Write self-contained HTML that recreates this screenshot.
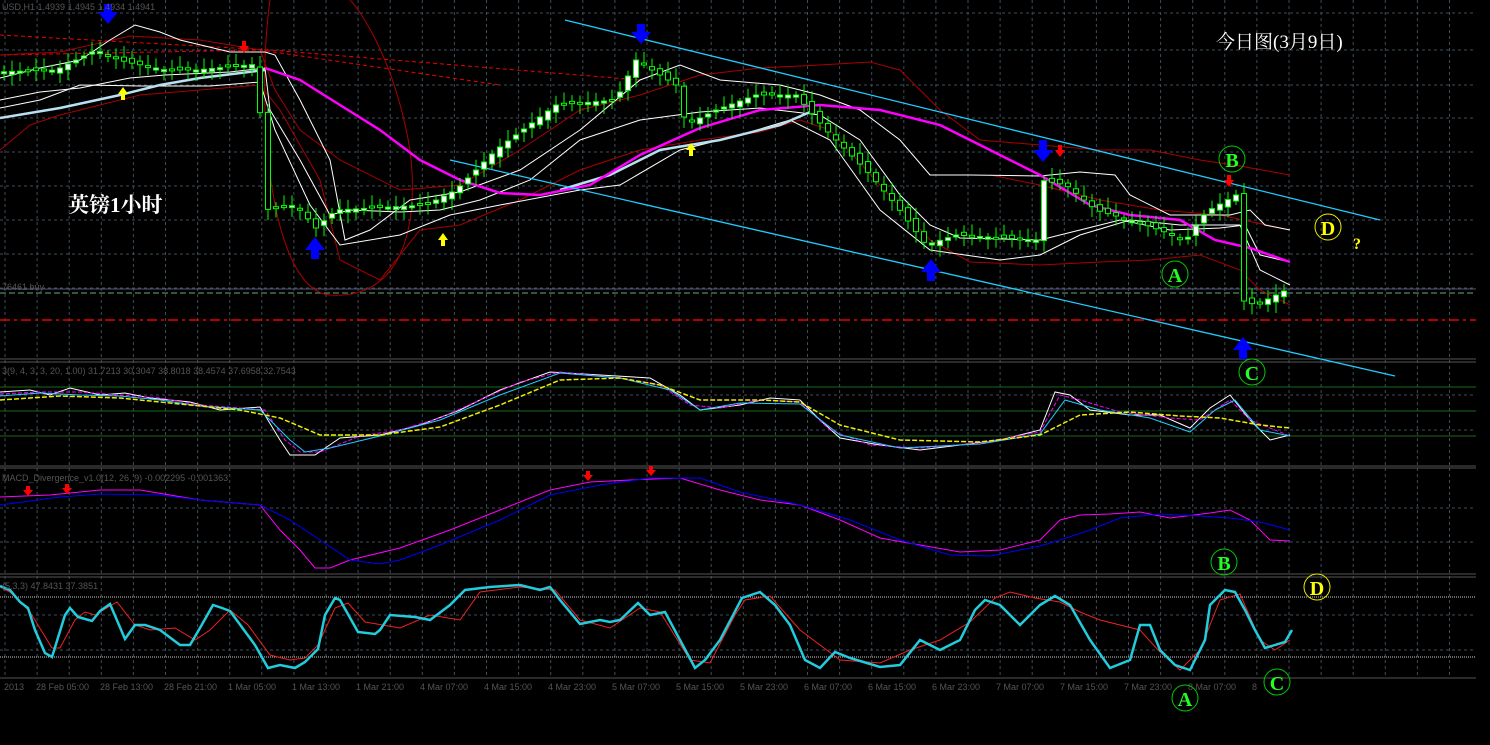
<!DOCTYPE html>
<html><head><meta charset="utf-8"><style>
html,body{margin:0;padding:0;background:#000;width:1490px;height:745px;overflow:hidden}
svg{display:block}
text{font-family:"Liberation Serif","Noto Serif CJK SC",serif}
text.sm,.sm text{font-family:"Liberation Sans",sans-serif;font-size:9px;fill:#555}
</style></head><body>
<svg id="s" width="1490" height="745" viewBox="0 0 1490 745" xmlns="http://www.w3.org/2000/svg">
<g id="grid" stroke="#3c4e5a" stroke-width="1" stroke-dasharray="3,3"></g>
<g stroke="#555" stroke-width="1">
<line x1="0" y1="359" x2="1476" y2="359"/><line x1="0" y1="362" x2="1476" y2="362"/>
<line x1="0" y1="466" x2="1476" y2="466"/><line x1="0" y1="468" x2="1476" y2="468"/>
<line x1="0" y1="574" x2="1476" y2="574"/><line x1="0" y1="577" x2="1476" y2="577"/>
<line x1="0" y1="678" x2="1476" y2="678"/>
</g>
<g fill="none">
<polyline stroke="#e00" stroke-width="1" stroke-dasharray="4,3" points="0,35 270,50 640,80"/>
<polyline stroke="#e00" stroke-width="1" stroke-dasharray="4,3" points="0,55 260,50 500,85"/>
<polyline stroke="#e00" stroke-width="1.5" stroke-dasharray="10,4,3,4" points="0,320 1476,320"/>
<polyline stroke="#6a7" stroke-width="1" stroke-dasharray="6,3" points="0,293 1476,293"/>
<polyline stroke="#557" stroke-width="1" points="0,289 1476,289"/>
<polyline stroke="#a00" stroke-width="1" points="0,55 60,52 130,36 200,40 260,50 275,90 300,130 340,160 400,190 460,185 520,150 580,110 640,95 700,75 760,68 820,65 870,62 900,70 940,110 980,140 1040,145 1100,150 1150,150 1200,160 1240,166 1290,175"/>
<polyline stroke="#a00" stroke-width="1" points="0,150 30,125 60,115 100,105 140,95 200,90 260,85 280,110 320,180 340,260 380,280 420,230 460,225 520,200 580,170 640,150 700,140 760,132 800,120 830,130 880,185 930,240 970,262 1040,265 1100,262 1150,260 1200,255 1240,270 1260,290 1290,305"/>
<path stroke="#a00" stroke-width="1" d="M270,0 C255,110 270,290 330,295 C400,300 420,230 410,150 C395,60 360,10 350,0"/>
<polyline stroke="#a00" stroke-width="1" points="990,175 1040,185 1100,200 1160,210 1220,215 1290,230"/>
<polyline stroke="#fff" stroke-width="1" points="0,78 40,68 80,60 110,40 135,25 160,32 180,40 230,52 265,52 275,55 300,100 330,160 345,240 370,230 410,200 460,192 520,170 580,130 640,80 680,65 720,80 780,85 820,95 860,110 900,140 930,175 970,175 1040,176 1080,172 1115,175 1130,195 1170,215 1230,215 1250,210 1265,225 1290,230"/>
<polyline stroke="#fff" stroke-width="1" points="0,100 40,92 80,88 130,78 165,75 230,72 265,68 270,110 300,160 330,215 350,210 400,212 440,210 480,200 530,180 580,140 640,120 700,112 760,108 820,115 860,140 900,195 930,225 960,238 1040,240 1080,230 1120,220 1170,230 1220,228 1245,225 1260,255 1290,262"/>
<polyline stroke="#fff" stroke-width="1" points="0,108 40,100 80,85 140,86 210,86 260,82 275,130 310,205 340,245 400,235 450,215 500,205 580,190 620,185 680,150 740,135 790,120 830,140 880,210 930,250 1000,260 1040,255 1080,235 1130,220 1180,225 1240,225 1260,270 1290,285"/>
<polyline stroke="#b8e0f0" stroke-width="2.5" points="0,118 60,108 120,95 160,85 200,78 265,70"/>
<polyline stroke="#b8e0f0" stroke-width="2.5" points="560,190 610,175 660,150 720,140 780,125 810,112"/>
<polyline stroke="#f0f" stroke-width="2.5" points="265,68 300,80 340,105 380,130 420,160 460,180 500,193 540,195 590,185 640,155 700,128 760,110 820,105 880,110 940,125 990,150 1040,175 1090,205 1130,215 1180,220 1215,240 1250,248 1290,262"/>
<line x1="565" y1="20" x2="1380" y2="220" stroke="#2cf" stroke-width="1.3"/>
<line x1="450" y1="160" x2="1395" y2="376" stroke="#2cf" stroke-width="1.3"/>
</g>
<g id="candles"></g>
<g>
<path d="M98,12 h20 l-10,12 z M104,12 v-8 h8 v8 z" fill="#00f"/>
<path d="M631,32 h20 l-10,12 z M637,32 v-8 h8 v8 z" fill="#00f"/>
<path d="M1033,150 h20 l-10,12 z M1039,150 v-10 h8 v10 z" fill="#00f"/>
<path d="M305,250 h20 l-10,-13 z M311,250 v9 h8 v-9 z" fill="#00f"/>
<path d="M921,272 h20 l-10,-13 z M927,272 v9 h8 v-9 z" fill="#00f"/>
<path d="M1233,350 h20 l-10,-13 z M1239,350 v9 h8 v-9 z" fill="#00f"/>
<path d="M239,46 h10 l-5,7 z M242,46 v-5 h4 v5 z" fill="#f00"/>
<path d="M1055,150 h10 l-5,7 z M1058,150 v-5 h4 v5 z" fill="#f00"/>
<path d="M1224,180 h10 l-5,7 z M1227,180 v-5 h4 v5 z" fill="#f00"/>
<path d="M118,94 h10 l-5,-7 z M121,94 v6 h4 v-6 z" fill="#ff0"/>
<path d="M438,240 h10 l-5,-7 z M441,240 v6 h4 v-6 z" fill="#ff0"/>
<path d="M686,150 h10 l-5,-7 z M689,150 v6 h4 v-6 z" fill="#ff0"/>
</g>
<g fill="none">
<line x1="0" y1="387" x2="1476" y2="387" stroke="#1a6a1a"/>
<line x1="0" y1="411" x2="1476" y2="411" stroke="#1a6a1a"/>
<line x1="0" y1="436" x2="1476" y2="436" stroke="#1a6a1a"/>
<polyline stroke="#fff" points="0,392 30,390 50,395 70,388 100,395 125,393 150,398 190,402 220,410 260,407 280,440 290,455 315,455 340,438 380,435 420,425 460,410 500,390 550,372 600,375 650,378 680,395 700,410 740,405 770,398 800,400 820,420 840,438 880,445 920,450 960,445 1000,440 1040,430 1055,392 1070,395 1090,410 1130,415 1160,415 1190,428 1210,408 1230,395 1250,420 1270,440 1290,435"/>
<polyline stroke="#f0f" stroke-dasharray="4,2" points="0,394 40,392 80,392 120,395 160,398 200,405 240,408 265,410 285,440 300,452 320,452 360,436 400,430 440,418 480,400 520,382 560,372 620,378 660,385 690,405 720,408 760,400 800,402 830,430 870,445 920,448 980,443 1040,432 1060,395 1080,400 1120,412 1170,418 1200,420 1230,400 1250,420 1290,436"/>
<polyline stroke="#2cf" points="0,396 40,393 80,395 120,396 160,400 200,406 260,410 290,440 305,452 330,448 380,436 440,420 500,395 560,373 620,378 670,390 700,410 740,403 800,404 840,435 900,448 980,444 1040,434 1065,400 1100,410 1150,418 1190,432 1215,410 1235,400 1260,430 1290,436"/>
<polyline stroke="#ee0" stroke-width="1.5" stroke-dasharray="5,2" points="0,400 60,396 120,398 180,404 240,410 280,418 320,435 380,435 440,427 500,405 560,380 620,378 660,385 700,400 760,400 800,402 840,425 900,440 980,442 1040,435 1080,415 1130,412 1180,416 1220,418 1260,425 1290,428"/>
</g>
<g fill="none">
<polyline stroke="#f0f" points="0,497 50,495 100,490 140,490 200,500 260,505 280,530 300,550 315,568 330,568 350,560 400,548 450,530 500,510 550,490 590,482 630,480 680,478 720,490 760,500 800,505 840,520 880,538 920,545 960,552 1000,550 1020,545 1040,540 1060,520 1080,515 1110,514 1140,512 1170,518 1210,513 1230,510 1250,520 1270,540 1290,541"/>
<polyline stroke="#00f" points="0,505 60,497 100,494 160,495 200,500 260,505 290,520 320,540 350,560 380,564 400,560 440,545 500,520 550,495 600,485 650,478 700,478 740,492 800,505 850,520 900,540 950,555 990,556 1040,546 1060,540 1090,530 1120,518 1160,514 1200,516 1230,518 1260,522 1290,530"/>
<path d="M23,490 h10 l-5,6 z M26,490 v-4 h4 v4 z M62,488 h10 l-5,6 z M65,488 v-4 h4 v4 z M583,475 h10 l-5,6 z M586,475 v-4 h4 v4 z M646,470 h10 l-5,6 z M649,470 v-4 h4 v4 z" fill="#f00"/>
</g>
<g fill="none">
<line x1="0" y1="597" x2="1476" y2="597" stroke="#ccc" stroke-dasharray="1,1"/>
<line x1="0" y1="657" x2="1476" y2="657" stroke="#ccc" stroke-dasharray="1,1"/>
<polyline stroke="#e22" points="0,587 10,592 30,612 52,648 60,648 75,620 85,612 95,615 117,602 135,625 150,630 175,628 195,640 210,630 230,610 248,625 270,655 290,660 305,658 318,645 335,608 348,603 365,622 400,628 430,615 460,620 480,592 520,587 555,590 580,620 610,628 640,608 660,612 690,660 710,663 735,615 745,600 770,596 800,630 840,660 880,663 910,650 940,640 970,622 995,598 1010,592 1035,598 1060,602 1080,612 1100,620 1140,630 1158,650 1180,670 1200,650 1220,600 1240,594 1260,640 1275,650 1290,640"/>
<polyline stroke="#2cd" stroke-width="2.5" points="0,586 10,590 20,602 28,608 35,630 45,653 52,657 65,615 70,608 78,617 92,621 100,611 110,604 125,639 135,625 145,625 160,630 180,645 190,645 200,628 213,605 222,608 230,611 255,645 268,668 280,665 295,668 305,662 318,649 325,615 335,598 340,600 358,632 375,634 380,630 390,615 415,617 430,620 450,605 465,590 490,587 520,585 540,590 550,587 560,600 580,624 600,620 610,622 620,620 638,603 650,615 665,612 680,640 695,668 705,660 720,640 742,598 760,592 775,605 790,625 805,660 820,668 835,652 850,658 880,667 900,665 920,640 940,650 960,640 975,610 985,600 1000,605 1020,625 1040,605 1055,596 1070,605 1090,640 1110,668 1130,660 1140,625 1150,625 1160,650 1175,665 1190,670 1205,640 1210,605 1225,590 1235,592 1245,610 1255,630 1265,648 1285,642 1292,630"/>
</g>
<text x="2" y="10" class="sm">USD,H1  1.4939 1.4945 1.4934 1.4941</text>
<text x="2" y="290" class="sm">76461 buy</text>
<text x="2" y="374" class="sm">3(9, 4, 3, 3, 20, 1.00) 31.7213 30.3047 38.8018 38.4574 37.6958 32.7543</text>
<text x="2" y="481" class="sm">MACD_Divergence_v1.0(12, 26, 9) -0.002295 -0.001363</text>
<text x="2" y="589" class="sm">(5,3,3) 47.8431 37.3851</text>
<g class="sm" id="tlab"></g>
<text x="68" y="212" font-size="21" font-weight="bold" fill="#fff">英镑1小时</text>
<text x="1216" y="48" font-size="19" fill="#fff">今日图(3月9日)</text>
<g font-size="20" font-weight="bold" text-anchor="middle">
<circle cx="1232" cy="159" r="13" fill="none" stroke="#0c0"/><text x="1232" y="167" fill="#2f2">B</text>
<circle cx="1175" cy="274" r="13" fill="none" stroke="#0c0"/><text x="1175" y="282" fill="#2f2">A</text>
<circle cx="1252" cy="372" r="13" fill="none" stroke="#0c0"/><text x="1252" y="380" fill="#2f2">C</text>
<circle cx="1328" cy="227" r="13" fill="none" stroke="#ee0"/><text x="1328" y="235" fill="#ff0">D</text>
<text x="1357" y="249" font-size="16" fill="#ff0">?</text>
<circle cx="1224" cy="562" r="13" fill="none" stroke="#0c0"/><text x="1224" y="570" fill="#2f2">B</text>
<circle cx="1317" cy="587" r="13" fill="none" stroke="#ee0"/><text x="1317" y="595" fill="#ff0">D</text>
<circle cx="1277" cy="682" r="13" fill="none" stroke="#0c0"/><text x="1277" y="690" fill="#2f2">C</text>
<circle cx="1185" cy="698" r="13" fill="none" stroke="#0c0"/><text x="1185" y="706" fill="#2f2">A</text>
</g>
</svg>
<script>
var NS="http://www.w3.org/2000/svg",g=document.getElementById('grid');
function el(p,t,a){var e=document.createElementNS(NS,t);for(var k in a)e.setAttribute(k,a[k]);p.appendChild(e);return e;}
for(var x=5;x<1476;x+=32.1){el(g,'line',{x1:x,y1:0,x2:x,y2:678});}
[13,50,85,118,152,186,220,254,288,395,430,508,542,615,650].forEach(function(y){el(g,'line',{x1:0,y1:y,x2:1476,y2:y});});
var pts=[[0,72],[60,70],[100,50],[130,62],[170,70],[200,70],[262,64],[268,210],[300,205],[320,228],[340,210],[430,205],[460,190],[500,150],[560,105],[620,100],[640,60],[680,85],[690,125],[720,110],[760,95],[800,95],[830,130],[870,170],[900,205],[930,245],[960,235],[1040,240],[1045,180],[1070,185],[1100,210],[1150,225],[1190,240],[1210,212],[1240,195],[1245,300],[1260,305],[1290,290]];
function py(x){for(var i=1;i<pts.length;i++){if(x<=pts[i][0]){var a=pts[i-1],b=pts[i];return a[1]+(b[1]-a[1])*(x-a[0])/(b[0]-a[0]);}}return 290;}
var c=document.getElementById('candles'),prev=py(0);
for(var x=4;x<1292;x+=8){var cl=py(x+4),op=prev+(Math.sin(x*1.7)*3);var t=Math.min(op,cl)-3-Math.abs(Math.sin(x*0.9))*8,b=Math.max(op,cl)+3+Math.abs(Math.cos(x*1.3))*8;
el(c,'line',{x1:x,y1:t,x2:x,y2:b,stroke:'#0f0','stroke-width':1});
var h=Math.max(2,Math.abs(cl-op));el(c,'rect',{x:x-2.5,y:Math.min(op,cl),width:5,height:h,fill:cl<op?'#fff':'#000',stroke:'#0f0','stroke-width':1});prev=cl;}
var tl=document.getElementById('tlab'),labs=["2013","28 Feb 05:00","28 Feb 13:00","28 Feb 21:00","1 Mar 05:00","1 Mar 13:00","1 Mar 21:00","4 Mar 07:00","4 Mar 15:00","4 Mar 23:00","5 Mar 07:00","5 Mar 15:00","5 Mar 23:00","6 Mar 07:00","6 Mar 15:00","6 Mar 23:00","7 Mar 07:00","7 Mar 15:00","7 Mar 23:00","8 Mar 07:00","8"];
labs.forEach(function(s,i){var t=el(tl,'text',{x:(i==0?4:36+(i-1)*64),y:690});t.textContent=s;});
</script>
</body></html>
